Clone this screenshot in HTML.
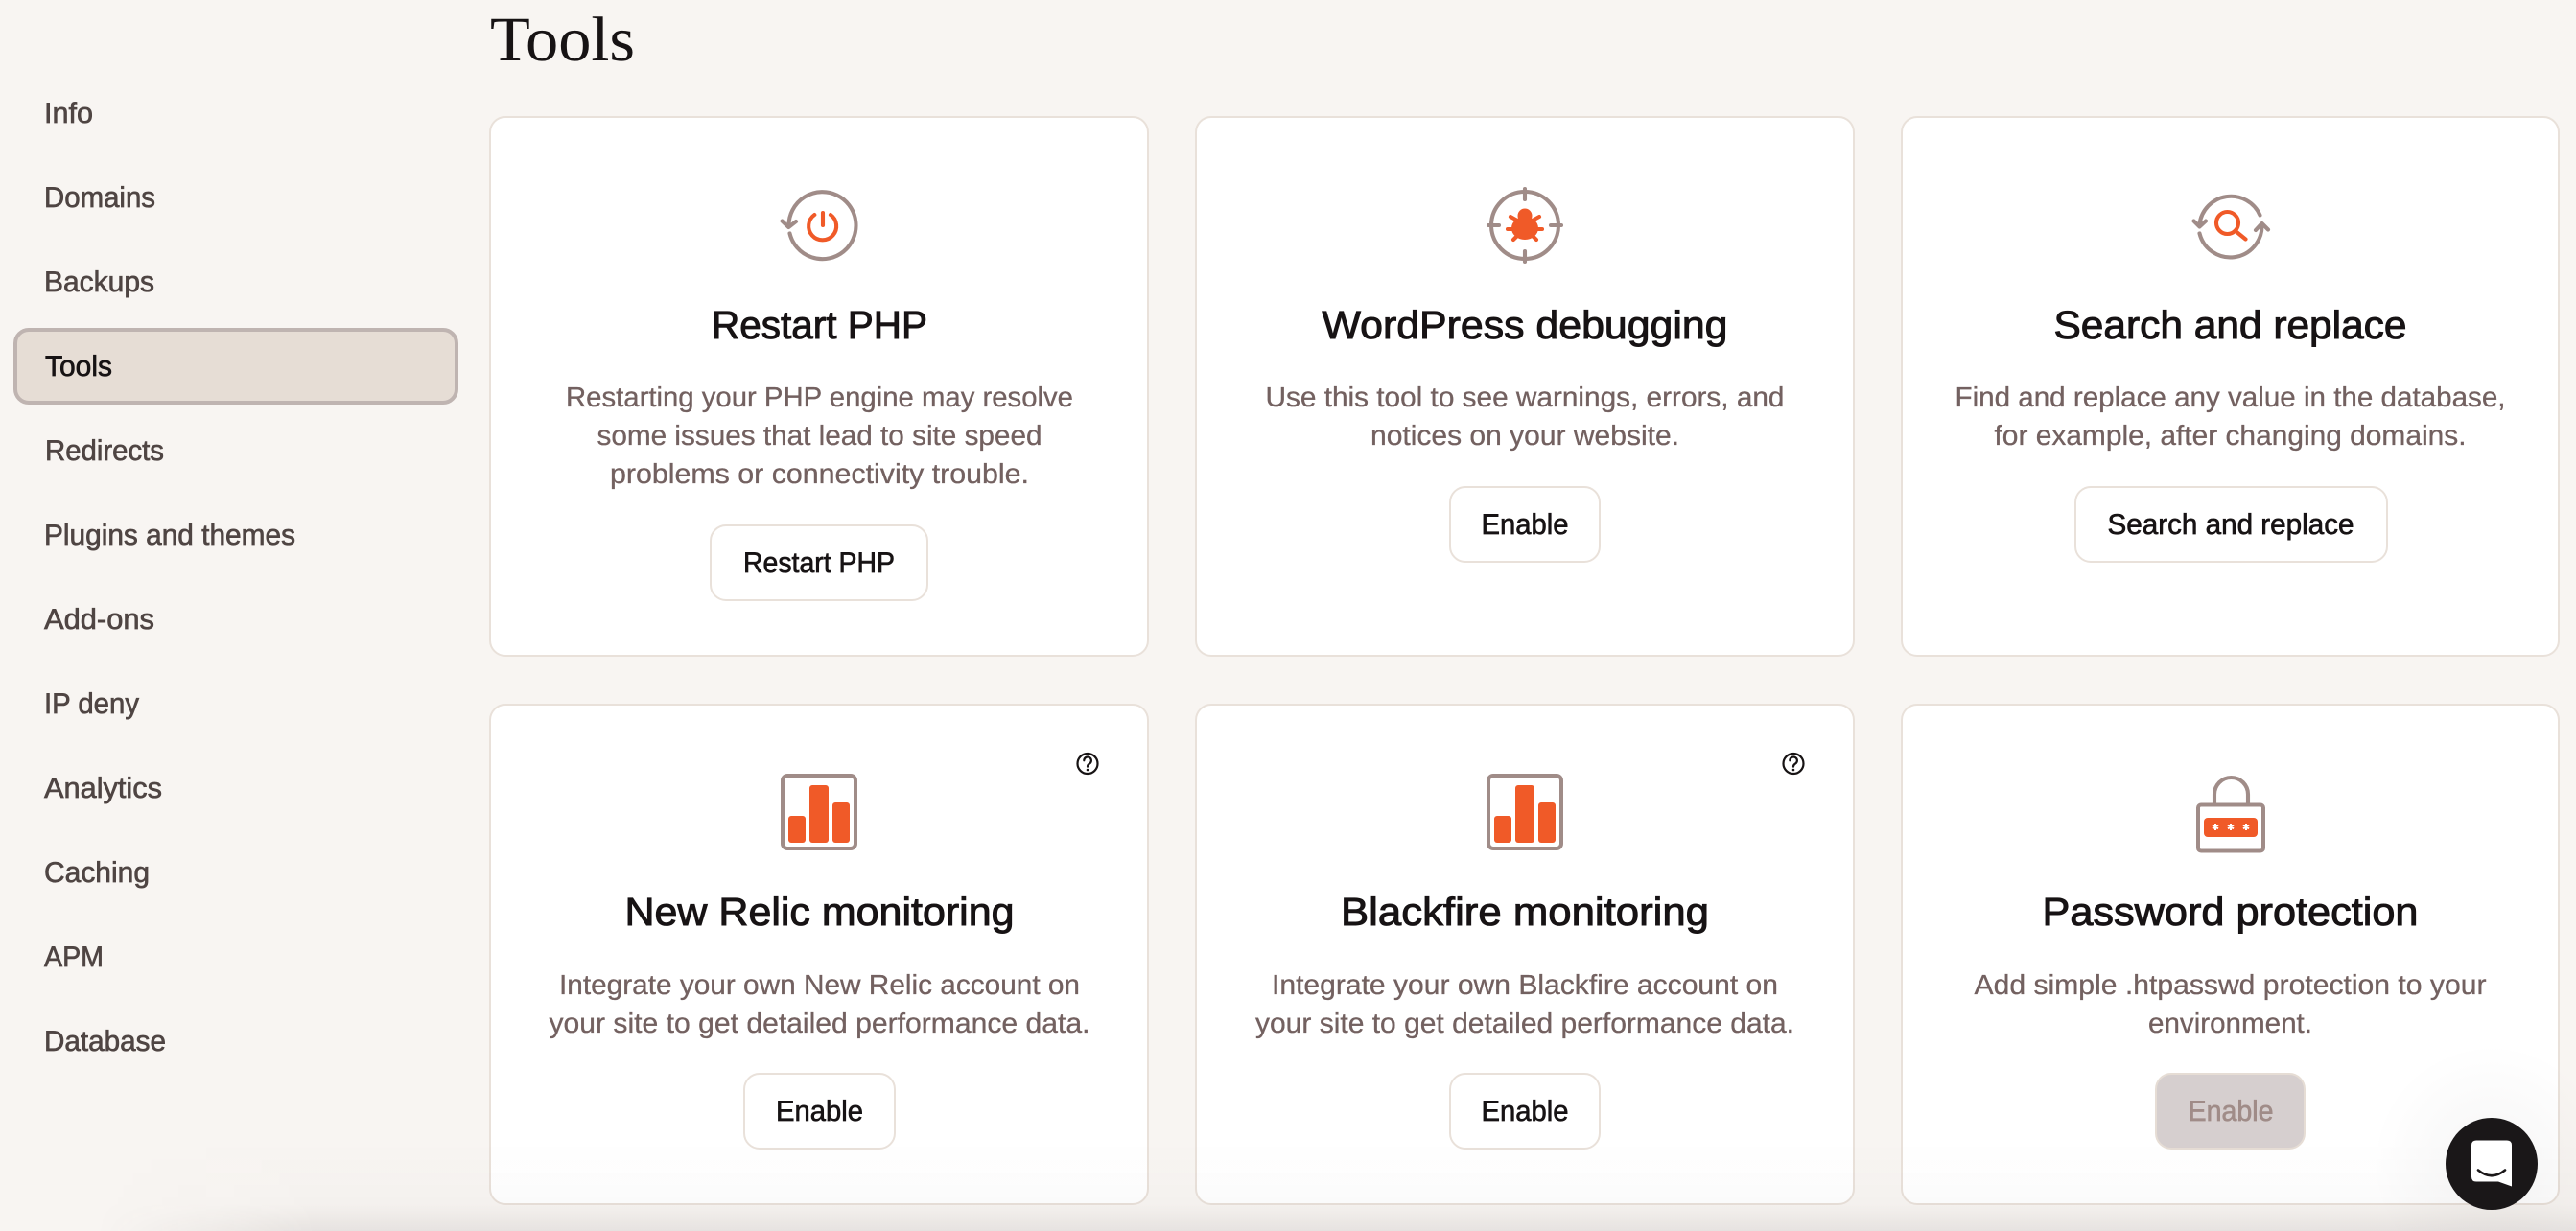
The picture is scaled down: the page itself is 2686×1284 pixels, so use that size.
<!DOCTYPE html>
<html lang="en">
<head>
<meta charset="utf-8">
<title>Tools</title>
<style>
html,body{margin:0;padding:0;width:2686px;height:1284px;overflow:hidden;background:#f8f5f2}
#page{position:relative;width:2686px;height:1284px;overflow:hidden;background:#f8f5f2}
svg{position:absolute;left:0;top:0;display:block}
text{font-family:"Liberation Sans",sans-serif;text-rendering:geometricPrecision}
.n{font-size:30px;fill:#4f4543;stroke:#4f4543;stroke-width:.65}
.h{font-size:41px;fill:#171314;stroke:#171314;stroke-width:.95;text-anchor:middle}
.b{font-size:29px;fill:#736160;stroke:#736160;stroke-width:.3;text-anchor:middle}
.k{font-size:30px;fill:#171314;stroke:#171314;stroke-width:.65;text-anchor:middle}
.card{fill:#fff;stroke:#e9e1da;stroke-width:2}
.btn{fill:#fff;stroke:#e9e1da;stroke-width:2}
.g{fill:none;stroke:#a08c88;stroke-width:4.1;stroke-linecap:round;stroke-linejoin:round}
.o{fill:none;stroke:#f05a28;stroke-width:4.1;stroke-linecap:round;stroke-linejoin:round}
#shade{position:absolute;left:0;top:1190px;width:2686px;height:94px;background:linear-gradient(to bottom,rgba(60,50,50,0) 0,rgba(60,50,50,.02) 70%,rgba(60,50,50,.09) 100%);-webkit-mask-image:linear-gradient(to right,transparent 100px,#000 330px);mask-image:linear-gradient(to right,transparent 100px,#000 330px)}
#chatshade{position:absolute;left:2470px;top:1086px;width:216px;height:198px;background:radial-gradient(circle 125px at 128px 128px,rgba(70,60,60,.05),rgba(70,60,60,0))}
</style>
</head>
<body>
<div id="page">
<svg width="2686" height="1284" viewBox="0 0 2686 1284" xmlns="http://www.w3.org/2000/svg">
  <!-- Sidebar -->
  <rect x="16" y="344" width="460" height="76" rx="14" fill="#e6ddd5" stroke="#bfb4b1" stroke-width="4"/>
  <text class="n" x="46" y="128" textLength="51" lengthAdjust="spacingAndGlyphs">Info</text>
  <text class="n" x="46" y="216" textLength="116" lengthAdjust="spacingAndGlyphs">Domains</text>
  <text class="n" x="46" y="304" textLength="115" lengthAdjust="spacingAndGlyphs">Backups</text>
  <text class="n" x="47" y="392" textLength="70" lengthAdjust="spacingAndGlyphs" style="fill:#171314;stroke:#171314">Tools</text>
  <text class="n" x="47" y="480" textLength="124" lengthAdjust="spacingAndGlyphs">Redirects</text>
  <text class="n" x="46" y="568" textLength="262" lengthAdjust="spacingAndGlyphs">Plugins and themes</text>
  <text class="n" x="46" y="656" textLength="115" lengthAdjust="spacingAndGlyphs">Add-ons</text>
  <text class="n" x="46" y="744" textLength="99" lengthAdjust="spacingAndGlyphs">IP deny</text>
  <text class="n" x="46" y="832" textLength="123" lengthAdjust="spacingAndGlyphs">Analytics</text>
  <text class="n" x="46" y="920" textLength="110" lengthAdjust="spacingAndGlyphs">Caching</text>
  <text class="n" x="46" y="1008" textLength="62" lengthAdjust="spacingAndGlyphs">APM</text>
  <text class="n" x="46" y="1096" textLength="127" lengthAdjust="spacingAndGlyphs">Database</text>

  <!-- Heading -->
  <text x="511" y="63" textLength="151" lengthAdjust="spacingAndGlyphs" style="font-family:'Liberation Serif',serif;font-size:66px;fill:#171314">Tools</text>

  <!-- Cards -->
  <rect class="card" x="511" y="122" width="686" height="562" rx="16"/>
  <rect class="card" x="1247" y="122" width="686" height="562" rx="16"/>
  <rect class="card" x="1983" y="122" width="685" height="562" rx="16"/>
  <rect class="card" x="511" y="735" width="686" height="521" rx="16"/>
  <rect class="card" x="1247" y="735" width="686" height="521" rx="16"/>
  <rect class="card" x="1983" y="735" width="685" height="521" rx="16"/>

  <!-- Card 1 -->
  <path class="g" d="M823.5 243.5A35 35 0 1 0 822.5 235"/>
  <path class="g" d="M815.5 230.5L822.3 237L830 231"/>
  <path class="o" d="M849.3 224A14.5 14.5 0 1 0 866 224"/>
  <path class="o" d="M858 222V235"/>
  <text class="h" x="854.5" y="353" textLength="225" lengthAdjust="spacingAndGlyphs">Restart PHP</text>
  <text class="b" x="854.5" y="424" textLength="529" lengthAdjust="spacingAndGlyphs">Restarting your PHP engine may resolve</text>
  <text class="b" x="854.5" y="464" textLength="464" lengthAdjust="spacingAndGlyphs">some issues that lead to site speed</text>
  <text class="b" x="854.5" y="504" textLength="437" lengthAdjust="spacingAndGlyphs">problems or connectivity trouble.</text>
  <rect class="btn" x="741" y="548" width="226" height="78" rx="16"/>
  <text class="k" x="854" y="597" textLength="158" lengthAdjust="spacingAndGlyphs">Restart PHP</text>

  <!-- Card 2 -->
  <circle class="g" cx="1590" cy="235" r="35"/>
  <path class="g" d="M1590 197V208M1590 262V273M1552 235H1563M1617 235H1628"/>
  <circle cx="1590" cy="225" r="7.5" fill="#f05a28"/>
  <ellipse cx="1590" cy="238" rx="14" ry="12" fill="#f05a28"/>
  <path class="o" d="M1575 226L1584 231M1605 226L1596 231M1572 239H1608M1578 250L1585 243M1602 250L1595 243"/>
  <text class="h" x="1590" y="353" textLength="423" lengthAdjust="spacingAndGlyphs">WordPress debugging</text>
  <text class="b" x="1590" y="424" textLength="541" lengthAdjust="spacingAndGlyphs">Use this tool to see warnings, errors, and</text>
  <text class="b" x="1590" y="464" textLength="322" lengthAdjust="spacingAndGlyphs">notices on your website.</text>
  <rect class="btn" x="1512" y="508" width="156" height="78" rx="16"/>
  <text class="k" x="1590" y="557" textLength="91" lengthAdjust="spacingAndGlyphs">Enable</text>

  <!-- Card 3 -->
  <path class="g" d="M2293.5 234A33 33 0 0 1 2356.5 224.5"/>
  <path class="g" d="M2293.5 243.5A33 33 0 0 0 2358.5 235"/>
  <path class="g" d="M2287.5 230.5L2293.5 236.5L2300 230.5"/>
  <path class="g" d="M2352 240L2358.5 233L2365 239.5"/>
  <circle class="o" cx="2322.5" cy="232.5" r="11.5"/>
  <path class="o" d="M2331 241L2341.5 249.5"/>
  <text class="h" x="2325.5" y="353" textLength="368" lengthAdjust="spacingAndGlyphs">Search and replace</text>
  <text class="b" x="2325.5" y="424" textLength="574" lengthAdjust="spacingAndGlyphs">Find and replace any value in the database,</text>
  <text class="b" x="2325.5" y="464" textLength="492" lengthAdjust="spacingAndGlyphs">for example, after changing domains.</text>
  <rect class="btn" x="2164" y="508" width="325" height="78" rx="16"/>
  <text class="k" x="2326" y="557" textLength="257" lengthAdjust="spacingAndGlyphs">Search and replace</text>

  <!-- Card 4 -->
  <rect x="816" y="809" width="76" height="76" rx="5" fill="none" stroke="#a08c88" stroke-width="4"/>
  <rect x="822" y="851" width="18" height="28" rx="3" fill="#f05a28"/>
  <rect x="844" y="819" width="20" height="60" rx="3" fill="#f05a28"/>
  <rect x="868" y="837" width="18" height="42" rx="3" fill="#f05a28"/>
  <g fill="none" stroke="#171314" stroke-width="2.2" stroke-linecap="round">
    <circle cx="1134" cy="796.5" r="10.5"/>
    <path d="M1130.3 793.3A3.8 3.8 0 1 1 1136 796.6C1134.8 797.4 1134 798 1134 799.6"/>
  </g>
  <circle cx="1134" cy="803" r="1.3" fill="#171314"/>
  <text class="h" x="854.5" y="965" textLength="406" lengthAdjust="spacingAndGlyphs">New Relic monitoring</text>
  <text class="b" x="854.5" y="1037" textLength="543" lengthAdjust="spacingAndGlyphs">Integrate your own New Relic account on</text>
  <text class="b" x="854.5" y="1077" textLength="564" lengthAdjust="spacingAndGlyphs">your site to get detailed performance data.</text>
  <rect class="btn" x="776" y="1120" width="157" height="78" rx="16"/>
  <text class="k" x="854.5" y="1169" textLength="91" lengthAdjust="spacingAndGlyphs">Enable</text>

  <!-- Card 5 -->
  <rect x="1552" y="809" width="76" height="76" rx="5" fill="none" stroke="#a08c88" stroke-width="4"/>
  <rect x="1558" y="851" width="18" height="28" rx="3" fill="#f05a28"/>
  <rect x="1580" y="819" width="20" height="60" rx="3" fill="#f05a28"/>
  <rect x="1604" y="837" width="18" height="42" rx="3" fill="#f05a28"/>
  <g fill="none" stroke="#171314" stroke-width="2.2" stroke-linecap="round">
    <circle cx="1870" cy="796.5" r="10.5"/>
    <path d="M1866.3 793.3A3.8 3.8 0 1 1 1872 796.6C1870.8 797.4 1870 798 1870 799.6"/>
  </g>
  <circle cx="1870" cy="803" r="1.3" fill="#171314"/>
  <text class="h" x="1590" y="965" textLength="384" lengthAdjust="spacingAndGlyphs">Blackfire monitoring</text>
  <text class="b" x="1590" y="1037" textLength="528" lengthAdjust="spacingAndGlyphs">Integrate your own Blackfire account on</text>
  <text class="b" x="1590" y="1077" textLength="562" lengthAdjust="spacingAndGlyphs">your site to get detailed performance data.</text>
  <rect class="btn" x="1512" y="1120" width="156" height="78" rx="16"/>
  <text class="k" x="1590" y="1169" textLength="91" lengthAdjust="spacingAndGlyphs">Enable</text>

  <!-- Card 6 -->
  <path class="g" d="M2309 838V828.5A17.5 17.5 0 0 1 2344 828.5V838"/>
  <rect x="2292" y="839.5" width="68" height="48" rx="3" fill="none" stroke="#a08c88" stroke-width="4"/>
  <rect x="2298" y="853" width="56" height="20" rx="4" fill="#f05a28"/>
  <path d="M2310 859V866M2307 860.7L2313 864.3M2313 860.7L2307 864.3M2326 859V866M2323 860.7L2329 864.3M2329 860.7L2323 864.3M2342 859V866M2339 860.7L2345 864.3M2345 860.7L2339 864.3" stroke="#fff" stroke-width="2" fill="none"/>
  <text class="h" x="2325.5" y="965" textLength="392" lengthAdjust="spacingAndGlyphs">Password protection</text>
  <text class="b" x="2325.5" y="1037" textLength="534" lengthAdjust="spacingAndGlyphs">Add simple .htpasswd protection to your</text>
  <text class="b" x="2325.5" y="1077" textLength="171" lengthAdjust="spacingAndGlyphs">environment.</text>
  <rect x="2248" y="1120" width="155" height="78" rx="16" fill="#d6cfcf" stroke="#e6ddd5" stroke-width="2"/>
  <text x="2326" y="1169" textLength="89" lengthAdjust="spacingAndGlyphs" style="font-size:30px;fill:#a08c88;stroke:#a08c88;stroke-width:.65;text-anchor:middle">Enable</text>
</svg>
<div id="shade"></div>
<div id="chatshade"></div>
<svg width="2686" height="1284" viewBox="0 0 2686 1284" xmlns="http://www.w3.org/2000/svg">
  <circle cx="2598" cy="1214" r="48" fill="#1a1718"/>
  <path d="M2582 1189.5H2614Q2619 1189.5 2619 1194.5V1237.5L2605 1232.5H2582Q2577 1232.5 2577 1227.5V1194.5Q2577 1189.5 2582 1189.5Z" fill="#fff"/>
  <path d="M2584 1220.5Q2598 1232 2612 1220.5" fill="none" stroke="#1a1718" stroke-width="2.6" stroke-linecap="round"/>
</svg>
</div>
</body>
</html>
